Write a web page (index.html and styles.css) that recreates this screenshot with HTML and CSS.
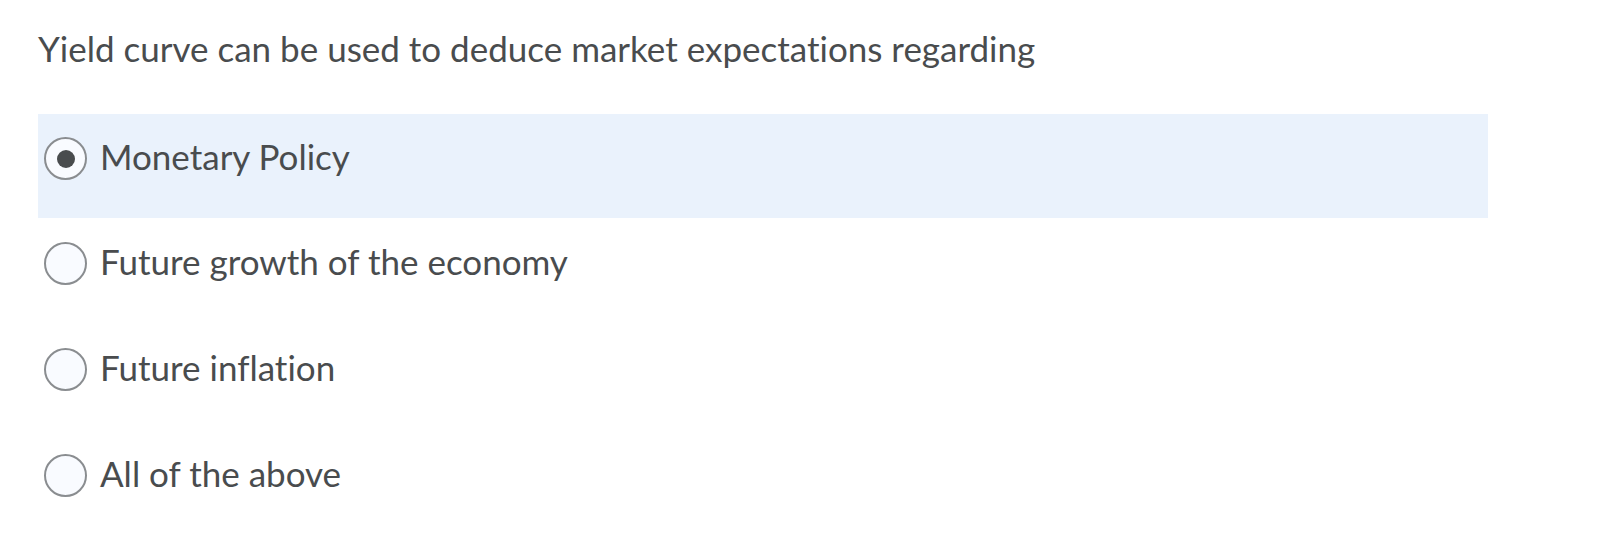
FILE: index.html
```html
<!DOCTYPE html>
<html lang="en">
<head>
<meta charset="utf-8">
<title>Question</title>
<link rel="stylesheet" href="styles.css">
</head>
<body>
<div class="question">
  <p class="prompt">Yield curve can be used to deduce market expectations regarding</p>
  <div class="options">
    <label class="option selected">
      <span class="radio checked"></span>
      <span class="label">Monetary Policy</span>
    </label>
    <label class="option">
      <span class="radio"></span>
      <span class="label">Future growth of the economy</span>
    </label>
    <label class="option">
      <span class="radio"></span>
      <span class="label">Future inflation</span>
    </label>
    <label class="option">
      <span class="radio"></span>
      <span class="label">All of the above</span>
    </label>
  </div>
</div>
</body>
</html>
```

FILE: styles.css
```css
html, body {
  margin: 0;
  padding: 0;
  background: #ffffff;
}
body {
  font-family: Lato, "Open Sans", sans-serif;
  color: #494c4e;
  font-variant-ligatures: none;
  font-feature-settings: "liga" 0, "dlig" 0;
}
.question {
  padding: 28px 0 0 38px;
  width: 1450px;
}
.prompt {
  margin: 0;
  font-size: 35px;
  line-height: 41px;
}
.options {
  margin-top: 45px;
  display: flex;
  flex-direction: column;
}
.option {
  display: flex;
  align-items: center;
  gap: 13px;
  height: 106px;
  box-sizing: border-box;
  padding: 0 0 17px 6px;
  font-size: 35px;
}
.option.selected {
  background: #eaf2fc;
  height: 104px;
  margin-bottom: 1px;
  padding-bottom: 15px;
}
.radio {
  flex: none;
  width: 43px;
  height: 43px;
  box-sizing: border-box;
  border: 2px solid #8a8d90;
  border-radius: 50%;
  background: #f9fbff;
  display: flex;
  align-items: center;
  justify-content: center;
}
.radio.checked::after {
  content: "";
  width: 18px;
  height: 18px;
  border-radius: 50%;
  background: #494c4e;
}
.label {
  line-height: 41px;
  padding-bottom: 4px;
}
```
